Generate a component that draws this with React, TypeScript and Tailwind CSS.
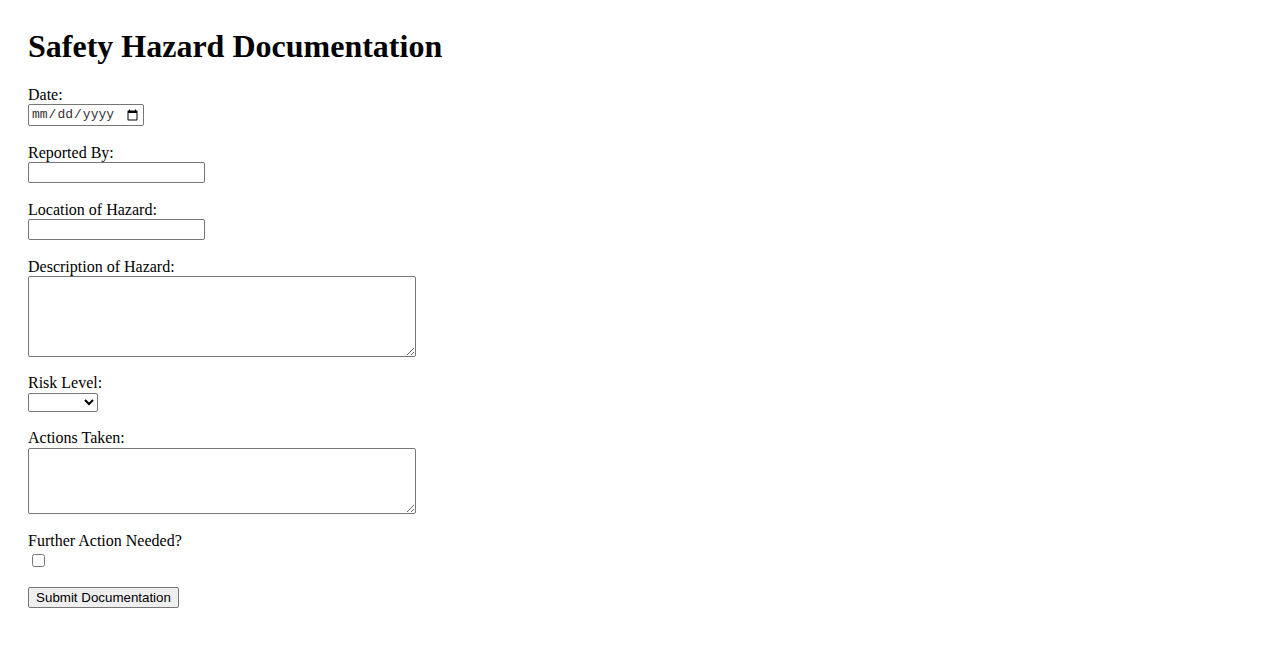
import React from "react";

const labelCls = "block text-[16px] leading-[18px] text-black";
const boxCls = "block border border-[#767676] rounded-[2px] bg-white px-[2px] py-[1px]";
const fieldCls = `${boxCls} text-[13.33px] font-['Liberation_Sans',Arial,sans-serif]`;

export default function App() {
  return (
    <div className="min-h-[650px] bg-white pl-[28px] pt-[28px] font-['Liberation_Serif','Times_New_Roman',serif] text-black">
      <h1 className="mb-[21px] text-[32px] font-bold leading-[37px]">Safety Hazard Documentation</h1>

      <form onSubmit={(e) => e.preventDefault()}>
        <label htmlFor="date" className={labelCls}>Date:</label>
        <input
          id="date"
          type="date"
          className={`${boxCls} h-[22px] w-[116px] font-['Liberation_Mono','DejaVu_Sans_Mono',monospace] text-[13px] text-[#333]`}
        />

        <label htmlFor="reportedBy" className={`${labelCls} mt-[18px]`}>Reported By:</label>
        <input id="reportedBy" type="text" className={`${fieldCls} h-[21px] w-[177px]`} />

        <label htmlFor="location" className={`${labelCls} mt-[18px]`}>Location of Hazard:</label>
        <input id="location" type="text" className={`${fieldCls} h-[21px] w-[177px]`} />

        <label htmlFor="description" className={`${labelCls} mt-[18px]`}>Description of Hazard:</label>
        <textarea id="description" rows={5} className={`${fieldCls} h-[81px] w-[388px]`} />

        <label htmlFor="risk" className={`${labelCls} mt-[17px]`}>Risk Level:</label>
        <select id="risk" className={`${fieldCls} mt-[1px] h-[19px] w-[70px] px-0 py-0`}>
          <option value=""></option>
          <option value="low">Low</option>
          <option value="medium">Medium</option>
          <option value="high">High</option>
        </select>

        <label htmlFor="actions" className={`${labelCls} mt-[17px]`}>Actions Taken:</label>
        <textarea id="actions" rows={4} className={`${fieldCls} mt-[1px] h-[66px] w-[388px]`} />

        <label htmlFor="further" className={`${labelCls} mt-[18px]`}>Further Action Needed?</label>
        <input id="further" type="checkbox" className="mt-[4px] ml-[4px] block h-[13px] w-[13px]" />

        <button
          type="submit"
          className="mt-[20px] block h-[21px] w-[151px] rounded-[2px] border border-[#767676] bg-[#efefef] text-[13.33px] leading-[17px] font-['Liberation_Sans',Arial,sans-serif] text-black"
        >
          Submit Documentation
        </button>
      </form>
    </div>
  );
}
